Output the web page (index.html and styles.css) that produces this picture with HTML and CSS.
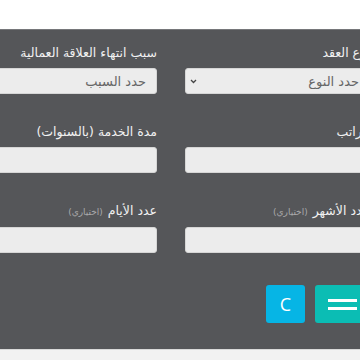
FILE: index.html
```html
<!DOCTYPE html>
<html lang="ar">

<head>
    <meta charset="UTF-8">
    <meta name="viewport" content="width=device-width, initial-scale=1.0">
    <title>حاسبة نهاية الخدمة</title>
    <link rel="stylesheet" href="styles.css">
</head>

<body>
    <div class="topbar"></div>

    <div class="panel">
        <form class="calc">
            <div class="grid">
                <!-- نوع العقد -->
                <div class="group">
                    <label class="label">نوع العقد</label>
                    <div class="select-wrap">
                        <select class="field select">
                            <option>حدد النوع</option>
                        </select>
                        <svg class="chevron" width="7" height="5" viewBox="0 0 7 5">
                            <path d="M1 1l2.5 2.5L6 1" fill="none" stroke="#444" stroke-width="1.3" />
                        </svg>
                    </div>
                </div>

                <!-- سبب انتهاء العلاقة -->
                <div class="group">
                    <label class="label">سبب انتهاء العلاقة العمالية</label>
                    <div class="select-wrap">
                        <select class="field select">
                            <option>حدد السبب</option>
                        </select>
                        <svg class="chevron" width="7" height="5" viewBox="0 0 7 5">
                            <path d="M1 1l2.5 2.5L6 1" fill="none" stroke="#444" stroke-width="1.3" />
                        </svg>
                    </div>
                </div>

                <div class="group">
                    <label class="label">الراتب</label>
                    <input class="field" type="text">
                </div>

                <div class="group">
                    <label class="label">مدة الخدمة (بالسنوات)</label>
                    <input class="field" type="text">
                </div>

                <div class="group">
                    <label class="label">عدد الأشهر<span class="hint">(اختياري)</span></label>
                    <input class="field" type="text">
                </div>

                <div class="group">
                    <label class="label">عدد الأيام<span class="hint hint-wide">(اختياري)</span></label>
                    <input class="field" type="text">
                </div>
            </div>

            <div class="actions">
                <button type="button" class="btn btn-calc">
                    <span class="bar"></span>
                    <span class="bar"></span>
                </button>
                <button type="reset" class="btn btn-clear">C</button>
            </div>
        </form>
    </div>

    <div class="footer"></div>
</body>

</html>
```

FILE: styles.css
```css
* {
    margin: 0;
    padding: 0;
    box-sizing: border-box;
}

body {
    font-family: "DejaVu Sans", "Noto Sans", sans-serif;
    background: #fff;
}

.topbar {
    height: 29px;
    background: #fff;
}

.panel {
    background: #555659;
    border-top: 1px solid #76777a;
    padding: 13px 0 26px;
    overflow: hidden;
}

.calc {
    width: 398px;
    margin-left: -28px;
    direction: rtl;
}

.grid {
    display: grid;
    grid-template-columns: 185px 185px;
    gap: 28px;
}

.group {
    display: flex;
    flex-direction: column;
}

.label {
    font-size: 12.5px;
    line-height: 20px;
    color: #f1f1f1;
    margin-bottom: 5px;
    white-space: nowrap;
}

.hint {
    font-size: 9px;
    color: #a9a9ab;
    margin-right: 5px;
}

.hint-wide {
    margin-right: 5px;
}

.field {
    height: 26px;
    width: 100%;
    background: #ececec;
    border: 1px solid #d6d6d6;
    border-radius: 3px;
    font-family: inherit;
    font-size: 13px;
    color: #666;
    padding: 0 10px;
    outline: none;
}

.select-wrap {
    position: relative;
}

.select {
    appearance: none;
    -webkit-appearance: none;
    direction: rtl;
}

.chevron {
    position: absolute;
    left: 5px;
    top: 11px;
}

.actions {
    display: flex;
    gap: 10px;
    margin-top: 32px;
}

.btn {
    height: 38px;
    border: none;
    border-radius: 3px;
    color: #fff;
    cursor: pointer;
}

.btn-calc {
    width: 55px;
    background: #0bbdb4;
    display: flex;
    flex-direction: column;
    align-items: center;
    justify-content: center;
    gap: 5px;
}

.btn-calc .bar {
    display: block;
    width: 29px;
    height: 3px;
    background: #fff;
}

.btn-clear {
    width: 39px;
    background: #06b5e5;
    font-family: "Open Sans", sans-serif;
    font-size: 18px;
}

.footer {
    height: 20px;
    background: #f2f2f2;
    border-top: 1px solid #d9d9d9;
}
```
